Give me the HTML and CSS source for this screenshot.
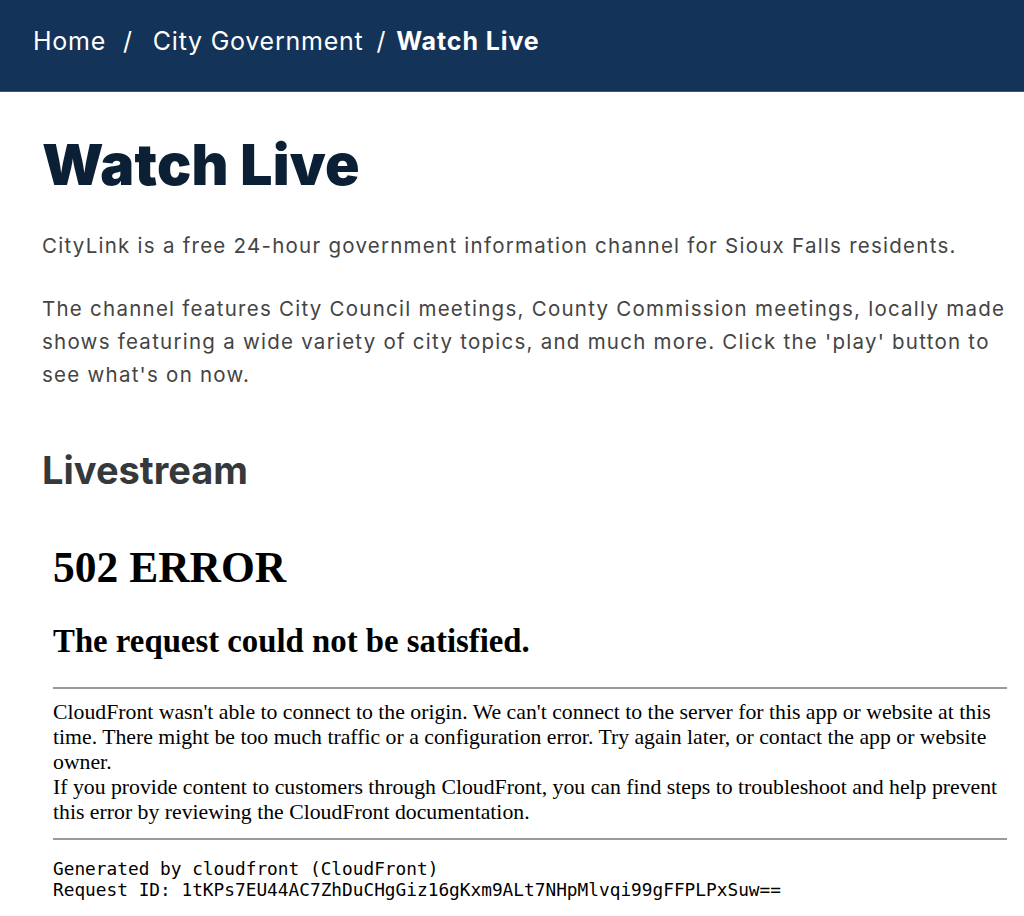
FILE: index.html
```html
<!DOCTYPE html>
<html lang="en">
<head>
	<meta charset="UTF-8">
	<title>Watch Live</title>
	<link rel="stylesheet" href="styles.css">
</head>
<body>
	<div class="crumbbar">
		<a class="crumb" href="#">Home</a>
		<span class="sep sep-wide">/</span>
		<a class="crumb" href="#">City Government</a>
		<span class="sep">/</span>
		<span class="crumb current">Watch Live</span>
	</div>

	<div class="content">
		<h1 class="title">Watch Live</h1>
		<p class="lead">CityLink is a free 24-hour government information channel for Sioux Falls residents.</p>
		<p class="lead">The channel features City Council meetings, County Commission meetings, locally made shows featuring a wide variety of city topics, and much more. Click the 'play' button to see what's on now.</p>

		<h2 class="section">Livestream</h2>

		<!-- player area, the embed returned the cloudfront error page -->
		<div class="player">
			<h1 class="err-title">502 ERROR</h1>
			<h2 class="err-sub">The request could not be satisfied.</h2>
			<hr class="err-rule">
			<div class="err-text">
				CloudFront wasn't able to connect to the origin. We can't connect to the server for this app or website at this time. There might be too much traffic or a configuration error. Try again later, or contact the app or website owner.
				<br>
				If you provide content to customers through CloudFront, you can find steps to troubleshoot and help prevent this error by reviewing the CloudFront documentation.
			</div>
			<hr class="err-rule">
			<pre class="err-code">Generated by cloudfront (CloudFront)
Request ID: 1tKPs7EU44AC7ZhDuCHgGiz16gKxm9ALt7NHpMlvqi99gFFPLPxSuw==</pre>
		</div>
	</div>
</body>
</html>
```

FILE: styles.css
```css
*{
	box-sizing: border-box;
}
body{
	margin: 0;
	background: #fff;
	font-family: 'Inter', 'Open Sans', sans-serif;
	color: #444;
}
a{
	color: inherit;
	text-decoration: none;
}

/* breadcrumb bar */
.crumbbar{
	display: flex;
	align-items: center;
	height: 92px;
	padding: 0 0 10px 33px;
	background: #143358;
	border-bottom: 1px solid #3a5676;
	color: #fff;
	font-size: 25px;
	letter-spacing: 0.75px;
}
.sep{
	margin: 0 10px 0 13px;
}
.sep-wide{
	margin: 0 20px 0 17px;
}
.current{
	font-weight: 700;
	letter-spacing: 0.9px;
}

/* page body */
.content{
	padding: 0 6px 0 42px;
}
.title{
	margin: 39px 0 30px;
	font-size: 57px;
	line-height: 1.2;
	font-weight: 900;
	color: #0c2035;
	letter-spacing: 0.2px;
}
.lead{
	margin: 0 0 30px;
	font-size: 20.5px;
	line-height: 33px;
	color: #444;
	letter-spacing: 1.25px;
}
.section{
	margin: 57px 0 0;
	font-size: 38px;
	line-height: 1.2;
	font-weight: 700;
	color: #35393c;
}

/* cloudfront error page inside the player */
.player{
	padding: 19px 11px 0;
	font-family: 'Liberation Serif', 'Times New Roman', serif;
	color: #000;
}
.err-title{
	margin: 29px 0 31px;
	font-size: 43.5px;
	font-weight: 700;
}
.err-sub{
	margin: 0 0 27px;
	font-size: 32.8px;
	font-weight: 700;
}
.err-rule{
	margin: 11px 0;
	height: 0;
	border: 0;
	border-top: 2px solid #9a9a9a;
}
.err-text{
	font-size: 21.76px;
	line-height: 25px;
}
.err-rule + .err-text + .err-rule{
	margin-top: 13px;
}
.err-code{
	margin: 18px 0;
	font-family: 'DejaVu Sans Mono', monospace;
	font-size: 17.8px;
	line-height: 21px;
}
```
